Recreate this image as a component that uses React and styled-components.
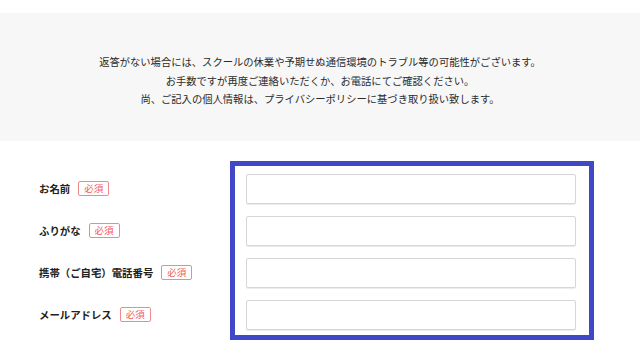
import React from "react";
import styled, { createGlobalStyle } from "styled-components";

const Global = createGlobalStyle`
  html, body { margin: 0; padding: 0; background: #fff; }
  body { font-family: "Noto Sans CJK JP", "Noto Sans", sans-serif; color: #333; }
`;

const Page = styled.div`
  padding-top: 13px;
`;

const Notice = styled.div`
  background: #f7f7f7;
  padding: 40px 0 32px;
  text-align: center;
`;

const NoticeLine = styled.p`
  margin: 0;
  font-size: 10.3px;
  line-height: 18.5px;
  color: #2b2b2b;
  letter-spacing: 0;
`;

const Form = styled.div`
  display: flex;
  align-items: flex-start;
  margin-top: 20px;
`;

const LabelColumn = styled.div`
  flex: 0 0 230px;
  padding: 13px 0 0 39px;
  box-sizing: border-box;
  display: flex;
  flex-direction: column;
  gap: 12px;
`;

const LabelRow = styled.div`
  height: 30px;
  display: flex;
  align-items: center;
  gap: 8px;
  white-space: nowrap;
`;

const Label = styled.span`
  font-size: 10.4px;
  font-weight: 700;
  color: #222;
`;

const Badge = styled.span`
  display: inline-flex;
  align-items: center;
  justify-content: center;
  flex-shrink: 0;
  width: 31px;
  height: 15px;
  box-sizing: border-box;
  border: 1px solid #f08a8a;
  border-radius: 2px;
  color: #ef5b5b;
  font-size: 9.5px;
  line-height: 1;
`;

const InputFrame = styled.div`
  flex: 0 0 364px;
  box-sizing: border-box;
  border: 5px solid #4048c8;
  padding: 8px 13px 5px 11px;
  display: flex;
  flex-direction: column;
  gap: 12px;
`;

const Input = styled.input`
  display: block;
  width: 100%;
  height: 30px;
  box-sizing: border-box;
  border: 1px solid #d6d6d6;
  box-shadow: 0 1px 0 #ececec;
  border-radius: 2px;
  background: #fff;
  padding: 0 8px;
  font-size: 11px;
  outline: none;
`;

const fields = [
  "お名前",
  "ふりがな",
  "携帯（ご自宅）電話番号",
  "メールアドレス",
];

export default function App() {
  return (
    <Page>
      <Global />
      <Notice>
        <NoticeLine>返答がない場合には、スクールの休業や予期せぬ通信環境のトラブル等の可能性がございます。</NoticeLine>
        <NoticeLine>お手数ですが再度ご連絡いただくか、お電話にてご確認ください。</NoticeLine>
        <NoticeLine>尚、ご記入の個人情報は、プライバシーポリシーに基づき取り扱い致します。</NoticeLine>
      </Notice>
      <Form>
        <LabelColumn>
          {fields.map((f) => (
            <LabelRow key={f}>
              <Label>{f}</Label>
              <Badge>必須</Badge>
            </LabelRow>
          ))}
        </LabelColumn>
        <InputFrame>
          {fields.map((f) => (
            <Input key={f} type="text" aria-label={f} />
          ))}
        </InputFrame>
      </Form>
    </Page>
  );
}
